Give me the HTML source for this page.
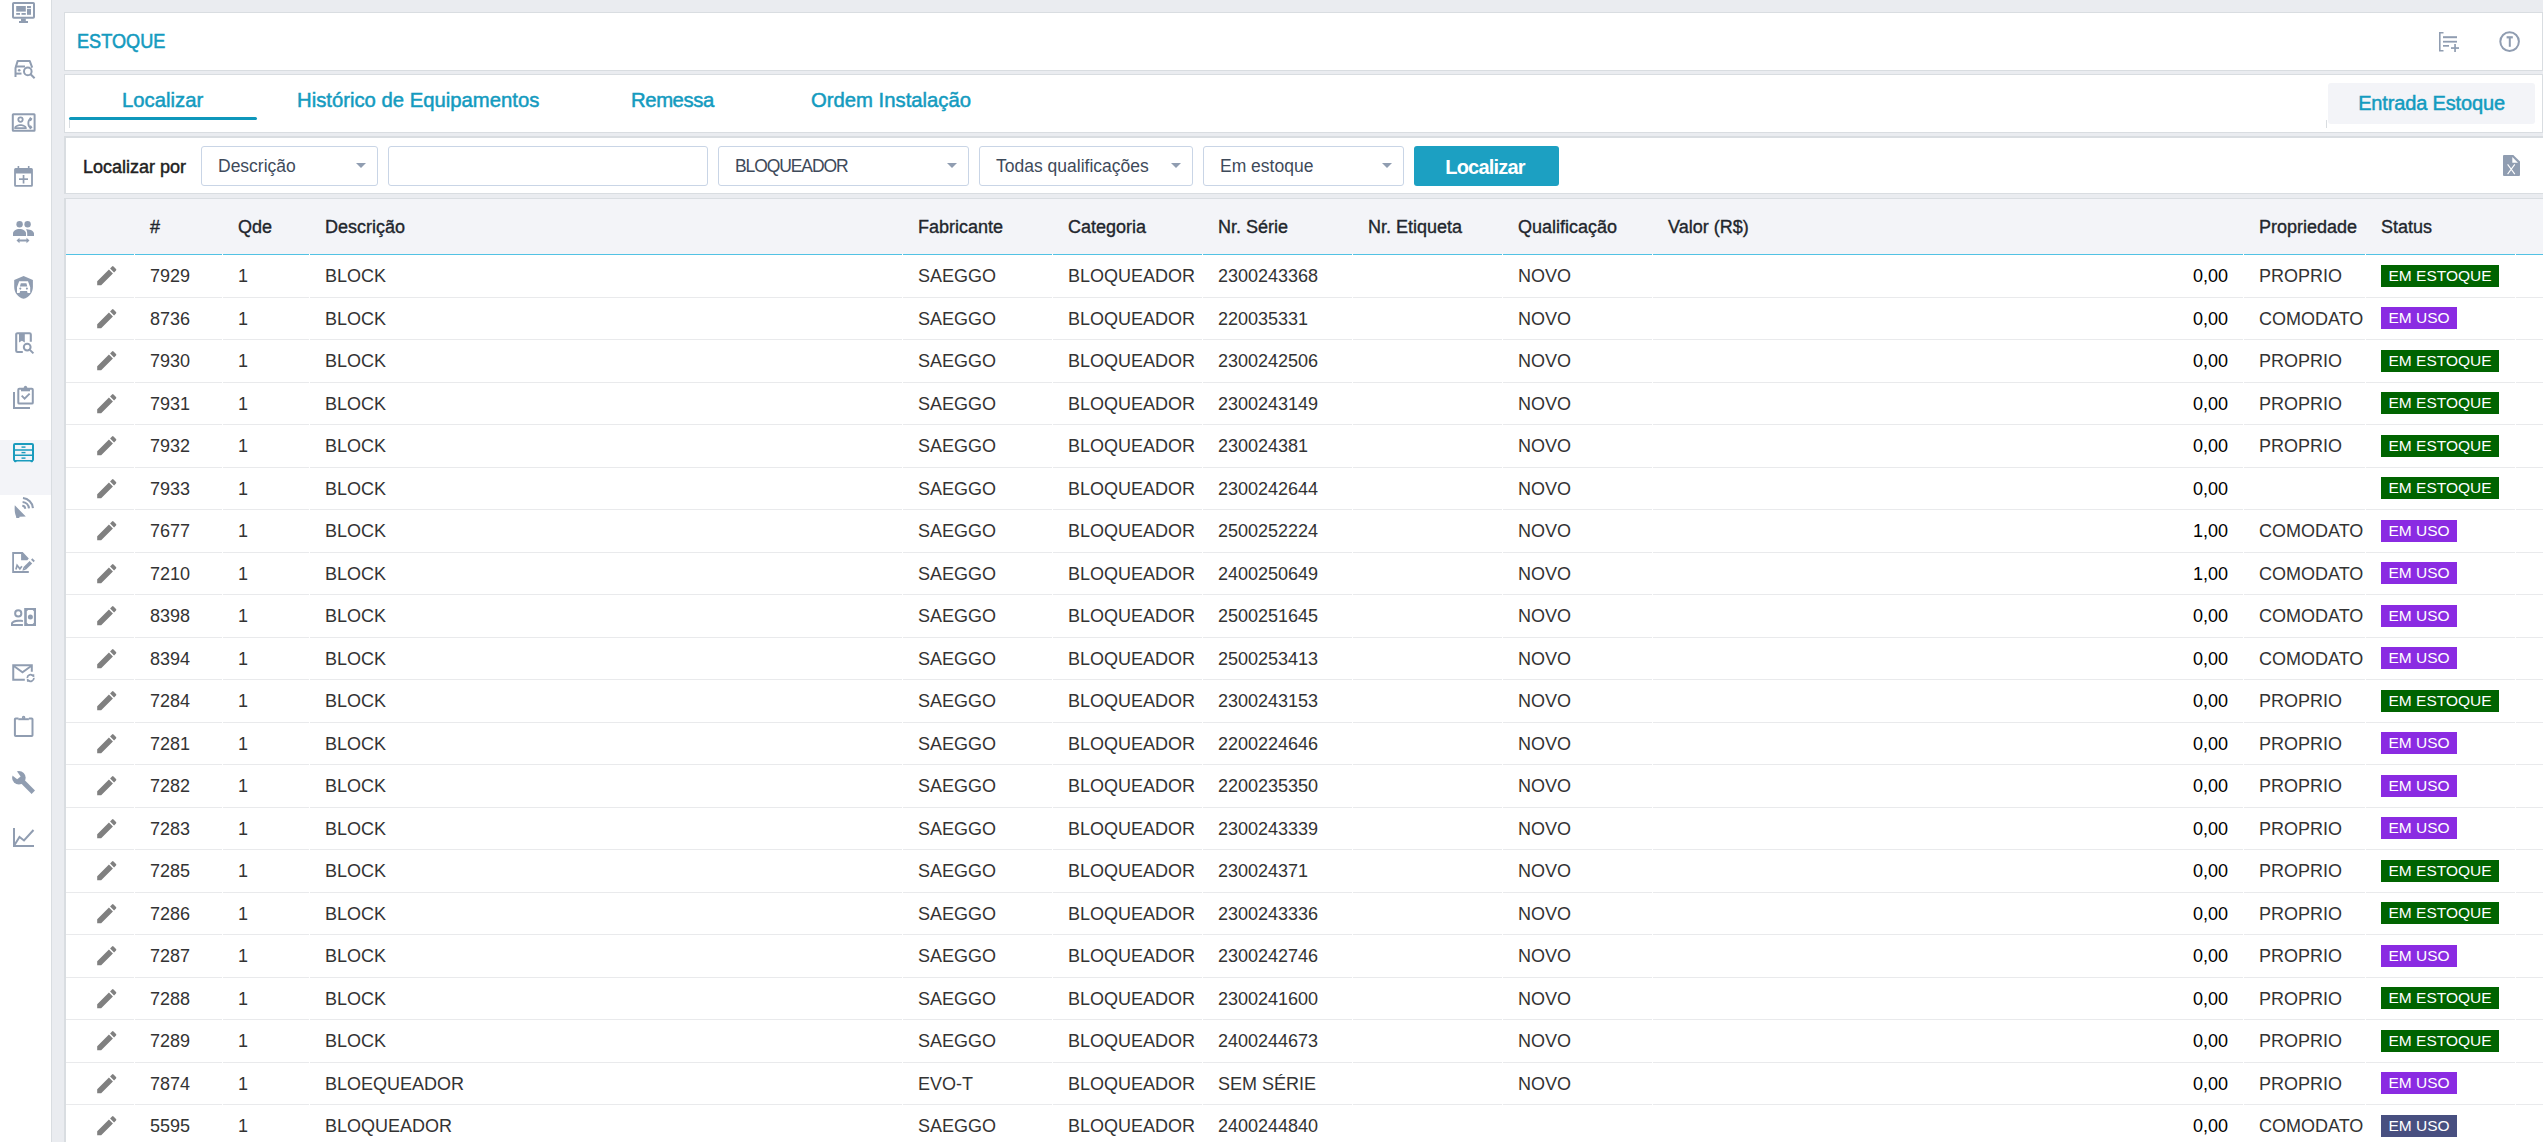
<!DOCTYPE html>
<html><head><meta charset="utf-8">
<style>
*{box-sizing:border-box;margin:0;padding:0}
html,body{width:2543px;height:1142px;overflow:hidden;background:#eaecf0;font-family:"Liberation Sans",sans-serif}
#side{position:absolute;left:0;top:0;width:52px;height:1142px;background:#fff;border-right:1px solid #d9dde1}
#side .it{position:absolute;left:0;width:51px;height:55px;display:flex;align-items:center;justify-content:center}
#side .it.act{background:#f3f4f8}
#side svg{fill:#909db1}
.card{position:absolute;left:64px;right:0;background:#fff;border:1px solid #d9dde1}
#c1{top:12px;height:59px}
#c2{top:74px;height:59px}
#c3{top:136px;height:58px;border-width:2px 0 1px 2px;right:0}
#tbl{position:absolute;left:64px;right:0;top:198px;bottom:0;background:#fff;border-top:1px solid #d9dde1;border-left:2px solid #d9dde1}
.title{position:absolute;left:12px;top:16.5px;font-size:19.5px;color:#149bbf;transform:scaleX(0.93);transform-origin:0 0;-webkit-text-stroke:0.55px #149bbf}
.tab{position:absolute;top:14px;font-size:20.3px;color:#149bbf;-webkit-text-stroke:0.5px #149bbf}
.tabline{position:absolute;left:4px;top:42px;width:188px;height:3px;background:#0e97bb;border-radius:2px}
.tabtick{position:absolute;left:4px;top:45px;width:1px;height:8px;background:#d9dde1}
#entrada{position:absolute;left:2263px;top:8px;width:207px;height:41px;background:#f3f4f8;border-radius:3px;font-size:20px;color:#149bbf;text-align:center;line-height:41px;-webkit-text-stroke:0.5px #149bbf;letter-spacing:-0.15px}
.lbl{position:absolute;left:17px;top:19px;font-size:18px;color:#222;-webkit-text-stroke:0.45px #222}
.sel{position:absolute;top:8px;height:40px;border:1px solid #c9d5e6;border-radius:3px;background:#fff;font-size:17.5px;color:#3e4a5a;padding-left:16px;line-height:38px}
.sel .ar{position:absolute;right:11px;top:16px;width:0;height:0;border-left:5.25px solid transparent;border-right:5.25px solid transparent;border-top:5.8px solid #909db1}
#btn{position:absolute;left:1348px;top:8px;width:145px;height:40px;background:#1ca0c2;border-radius:3px;color:#fff;font-size:20px;letter-spacing:-0.8px;text-align:center;line-height:42px;font-weight:bold;padding-right:3px}
.thead{position:absolute;left:0;right:0;top:0;height:56px;background:#f3f4f8;border-bottom:1px solid #52c2e4;display:flex}
.tr{display:flex;height:42.5px;border-bottom:1px solid #e9eaec;align-items:center}
.tbody{position:absolute;left:0;right:0;top:56px}
.c{flex:none;padding-left:16px;padding-top:2px;font-size:18px;color:#333;white-space:nowrap;overflow:hidden}
.thead .c{padding-top:0;color:#22262d;-webkit-text-stroke:0.35px #22262d;line-height:56px}
.c0{width:68px;padding-left:0}
.c1{width:88px}.c2{width:87px}.c3{width:593px}
.c4,.c5,.c6,.c7,.c8{width:150px}
.c9{width:591px;text-align:right;padding-left:0;padding-right:15px;color:#000}
.c10{width:122px}.c11{width:150px;padding-top:0}.c12{width:28px}
.pen{fill:#808080;margin-left:28px;margin-top:-2px;display:block}
.bd{display:inline-block;height:22px;line-height:22px;padding:0 7.5px;font-size:15.5px;color:#fff}
.be{background:#006400}.bu{background:#8a2be2}.bdk{background:#484f80}
</style></head><body>
<div id="side">
<svg width="51" height="1142" viewBox="0 0 51 1142" style="position:absolute;left:0;top:0">
<rect x="0" y="440" width="51" height="55" fill="#f3f4f8"/>
<g fill="#909db1" stroke="none">
 <path d="M13.8,2 h19.4 a1.8,1.8 0 0 1 1.8,1.8 v13.2 a1.8,1.8 0 0 1 -1.8,1.8 h-19.4 a1.8,1.8 0 0 1 -1.8,-1.8 v-13.2 a1.8,1.8 0 0 1 1.8,-1.8z M14,4 v12.8 h19 v-12.8z"/>
 <rect x="16.2" y="6" width="9.6" height="5.6"/>
 <rect x="16.2" y="13" width="3.8" height="1.8"/><rect x="21.5" y="13" width="4.3" height="1.8"/>
 <rect x="27" y="6" width="4" height="2.2"/><rect x="27" y="9" width="4" height="5.8"/>
 <rect x="21" y="18.5" width="4.8" height="3"/><rect x="19" y="21" width="9" height="2"/>
 <circle cx="19.2" cy="70.3" r="1.3"/>
 <path d="M13.3,113.3 h20.8 a1.5,1.5 0 0 1 1.5,1.5 v15.4 a1.5,1.5 0 0 1 -1.5,1.5 h-20.8 a1.5,1.5 0 0 1 -1.5,-1.5 v-15.4 a1.5,1.5 0 0 1 1.5,-1.5z M13.8,115.3 v14.4 h19.8 v-14.4z"/>
 <path d="M14.3,129 v-1.2 c0,-2.2 4,-3.6 6.2,-3.6 s6.2,1.4 6.2,3.6 v1.2z M16.3,127.3 h8.4 c-0.6,-0.7 -2.4,-1.3 -4.2,-1.3 s-3.6,0.6 -4.2,1.3z" fill-rule="evenodd"/>
 <path d="M30,117 l2.5,1.8 l-1.6,2.4 l-2.2,-1z M30,129.4 l2.5,-1.8 l-1.6,-2.4 l-2.2,1z"/>
 <path d="M15.6,168 h15.8 a1.5,1.5 0 0 1 1.5,1.5 v15.8 a1.5,1.5 0 0 1 -1.5,1.5 h-15.8 a1.5,1.5 0 0 1 -1.5,-1.5 v-15.8 a1.5,1.5 0 0 1 1.5,-1.5z M15.9,173.5 v11.5 h15.2 v-11.5z"/>
 <rect x="17.6" y="166" width="1.6" height="3"/><rect x="27.9" y="166" width="1.6" height="3"/>
 <rect x="19" y="178.3" width="9" height="1.7"/><rect x="22.7" y="175" width="1.7" height="8.5"/>
 <circle cx="19.6" cy="224.3" r="3.2"/><circle cx="27.6" cy="224.3" r="3.2"/>
 <path d="M13,236 v-2.5 c0,-2.6 3,-4.5 6.5,-4.5 s6.5,1.9 6.5,4.5 v2.5z"/>
 <path d="M27,229.3 c3.8,0.2 7,2 7,4.2 v2.5 h-6.8 v-2.5 c0,-1.6 -0.3,-3 -1.2,-4.2z"/>
 <path d="M16.5,240.5 l3,-2.8 v1.9 h7 v-1.9 l3,2.8 l-3,2.8 v-1.9 h-7 v1.9z"/>
 <path fill-rule="evenodd" d="M23.6,276 L14.2,280 v7 c0,5.8 4,10.6 9.4,11.8 c5.4,-1.2 9.3,-6 9.3,-11.8 v-7z M19.2,281.3 h8.8 l2.2,6 v5.7 h-2.6 l-0.6,-1.9 h-6.8 l-0.6,1.9 h-2.6 v-5.7z M20.8,283.2 l-0.9,3.4 h7.4 l-0.9,-3.4z M20.3,287.6 a1,1 0 1 0 0.01,0z M26.9,287.6 a1,1 0 1 0 0.01,0z"/>
 <path d="M19,334 h5.8 v8.5 l-2.9,-1.8 l-2.9,1.8z"/>
 <path fill-rule="evenodd" d="M19.2,387.8 h12.7 a1.9,1.9 0 0 1 1.9,1.9 v13 a1.9,1.9 0 0 1 -1.9,1.9 h-12.7 a1.9,1.9 0 0 1 -1.9,-1.9 v-13 a1.9,1.9 0 0 1 1.9,-1.9z M19.3,389.8 v12.8 h12.5 v-12.8z"/>
 <circle cx="25.5" cy="387.3" r="1.6"/><rect x="21" y="389" width="9" height="2.3"/>
 <path d="M21,396.3 l1.3,-1.3 l2.3,2.3 l4.4,-4.4 l1.3,1.3 l-5.7,5.7z"/>
 <path d="M13,392 h2 v15 h15 v1.9 h-17z"/>
 <path fill-rule="evenodd" d="M18.25,609.3 a4.1,4.1 0 1 1 0,8.2 a4.1,4.1 0 1 1 0,-8.2z M18.25,611.3 a2.1,2.1 0 1 0 0,4.2 a2.1,2.1 0 1 0 0,-4.2z"/>
 <path fill-rule="evenodd" d="M24.2,607.9 h11.8 v18.1 h-11.8z M26.8,611.2 l1.3,-1.2 h4.5 l1.3,1.2 v11.6 l-1.3,1.2 h-4.5 l-1.3,-1.2z"/>
 <circle cx="30.4" cy="617.1" r="2.5"/>
 <path fill-rule="evenodd" d="M11,626 v-2.2 c0,-2.5 3.5,-4 7.5,-4 c1.8,0 3.3,0.1 4.4,0.3 v2 c-1.1,-0.2 -2.6,-0.3 -4.4,-0.3 c-3.3,0 -5.5,1 -5.5,2 v0.2 h9.9 v2z"/>
 <circle cx="18.9" cy="777.8" r="6.8"/>
 <path d="M20.6,776.1 L35,790.5 L31.6,793.9 L17.2,779.5z"/>
 <path fill="#fff" d="M14.5,767.8 L20.6,776.5 L17.2,779.3 L9.5,773.2z"/>
</g>
<g fill="none" stroke="#909db1" stroke-width="2">
 <path d="M15.5,77 v-9 l2.1,-6.9 h12.2 l2.4,6.5" stroke-linejoin="round"/>
 <path d="M15.5,66.5 h9.5"/><path d="M15.5,73.6 h6"/>
 <circle cx="27.8" cy="71.4" r="3.8"/><path d="M30.6,74.2 l4,4"/>
 <path d="M31.2,118.3 c-2.1,1 -2.9,2.8 -2.9,4.9 s0.8,3.9 2.9,4.9" stroke-width="1.8"/>
 <circle cx="20.5" cy="119.6" r="2.2" stroke-width="1.8"/>
 <path d="M30.8,341.8 v-7.3 a1.3,1.3 0 0 0 -1.3,-1.3 h-12 a1.3,1.3 0 0 0 -1.3,1.3 v16.2 a1.3,1.3 0 0 0 1.3,1.3 h5.3" stroke-width="2.1"/>
 <circle cx="27.2" cy="347.1" r="3.4"/><path d="M29.9,349.9 l3.5,3.5"/>
 <path d="M22.28,505.81 A3.2,3.2 0 0 1 25.19,508.72" stroke-width="2.1"/>
 <path d="M22.61,502.03 A7,7 0 0 1 28.97,508.39" stroke-width="2.1"/>
 <path d="M22.96,498.04 A11,11 0 0 1 32.96,508.04" stroke-width="2.1"/>
 <path d="M15.9,569.5 L17.1,565.3 L19.9,568.8 L21.9,566.3" stroke-width="1.7" stroke-linejoin="miter"/>
 <path d="M24.6,568.6 L30.9,562.3" stroke-width="3.6"/>
 <path d="M32.3,560.9 L33.6,559.6" stroke-width="3.6"/>
 <path d="M24.8,679.8 H13.25 V665.2 H31.8 V671.7"/>
 <path d="M13.8,666 L22.5,672.3 L31.2,666"/>
 <path d="M27.3,678 A3.3,3.3 0 0 1 33.13,675.88 M33.9,678 A3.3,3.3 0 0 1 28.07,680.12" stroke-width="1.7"/>
 <path d="M18.5,718.5 h-2.8 a0.8,0.8 0 0 0 -0.8,0.8 v15.9 a0.8,0.8 0 0 0 0.8,0.8 h16 a0.8,0.8 0 0 0 0.8,-0.8 v-15.9 a0.8,0.8 0 0 0 -0.8,-0.8 h-2.8"/>
 <path d="M18.3,719.2 h10.6"/><circle cx="23.6" cy="717.6" r="1" stroke-width="1.5"/>
 <path d="M14,828 v18 h20" /><path d="M14.5,845 l5,-8 l4.5,3.5 l9.5,-10.5"/>
</g>
<path fill="#909db1" d="M14.8,505.3 L25.8,516.5 L19.6,516.8 L19.2,518 h-2.9 l-0.3,-1.8 c-1.2,-3 -1.6,-6.5 -1.2,-10.9z"/>
<path fill="#909db1" d="M12.2,552.1 h10.5 l6.1,6.5 l-1.5,1.6 h-6.2 v-6.3 h-7.1 v17 h14.8 v2 h-16.6z M23.33,567.33 L25.87,569.87 L22.4,570.8z"/>
<path fill="#909db1" d="M34.4,677.6 l-0.2,-3.6 l-3.3,1.5z M26.8,678.4 l0.2,3.6 l3.3,-1.5z"/>
<g fill="#1a9bbd">
 <path fill-rule="evenodd" d="M15,443 h17 a2,2 0 0 1 2,2 v14.5 a2,2 0 0 1 -2,2 h-17 a2,2 0 0 1 -2,-2 v-14.5 a2,2 0 0 1 2,-2z M15,445 v4.2 h17 v-4.2z M15,450.8 v3.7 h17 v-3.7z M15,456 v4 h17 v-4z"/>
 <rect x="21.5" y="446.4" width="4" height="1.4"/><rect x="21.5" y="451.9" width="4" height="1.4"/><rect x="21.5" y="457.4" width="4" height="1.4"/>
 <rect x="14" y="460" width="2.6" height="2.2" rx="1"/><rect x="30.4" y="460" width="2.6" height="2.2" rx="1"/>
</g>
</svg>

</div>
<div class="card" id="c1">
  <div class="title">ESTOQUE</div>
  <svg width="2543" height="60" style="position:absolute;left:-65px;top:-13px" fill="#909db1">
<path d="M2439,32 h4.5 v1.6 h-2.9 v16.3 h2.9 v1.6 h-4.5z"/>
<rect x="2443" y="36.2" width="14" height="2"/><rect x="2443" y="40.8" width="14" height="1.8"/><rect x="2443" y="45" width="6" height="1.7"/>
<rect x="2451" y="47.2" width="8" height="1.7"/><rect x="2454.2" y="44" width="1.7" height="8"/>
<circle cx="2509.6" cy="41.6" r="9.3" fill="none" stroke="#909db1" stroke-width="2"/>
<rect x="2506.6" y="36.2" width="6.2" height="2.2"/><rect x="2508.8" y="38" width="2" height="8.8"/>
</svg>
</div>
<div class="card" id="c2">
  <div class="tab" style="left:57px">Localizar</div>
  <div class="tab" style="left:232px">Histórico de Equipamentos</div>
  <div class="tab" style="left:566px;letter-spacing:-0.4px">Remessa</div>
  <div class="tab" style="left:746px">Ordem Instalação</div>
  <div class="tabline"></div><div class="tabtick"></div>
  <div style="position:absolute;left:2261px;top:45px;width:1px;height:8px;background:#d9dde1"></div><div id="entrada">Entrada Estoque</div>
</div>
<div class="card" id="c3">
  <div class="lbl">Localizar por</div>
  <div class="sel" style="left:135px;width:177px">Descrição<span class="ar"></span></div>
  <div class="sel" style="left:322px;width:320px"></div>
  <div class="sel" style="left:652px;width:251px"><span style="letter-spacing:-1.1px">BLOQUEADOR</span><span class="ar"></span></div>
  <div class="sel" style="left:913px;width:214px">Todas qualificações<span class="ar"></span></div>
  <div class="sel" style="left:1137px;width:201px">Em estoque<span class="ar"></span></div>
  <div id="btn">Localizar</div>
  <svg width="2543" height="200" style="position:absolute;left:-66px;top:-138px">
<path fill="#909db1" d="M2504,155 h9.3 l6.7,6.5 v13.5 a1,1 0 0 1 -1,1 h-15 a1,1 0 0 1 -1,-1 v-19 a1,1 0 0 1 1,-1z"/>
<path fill="#fff" d="M2512.3,157 v5.7 h5.7z"/>
<path stroke="#fff" stroke-width="1.1" d="M2507.6,164.3 l7.2,9.8 M2514.8,164.3 l-7.2,9.8"/>
</svg>
</div>
<div id="tbl">
  <div class="thead">
    <div class="c c0"></div><div class="c c1">#</div><div class="c c2">Qde</div><div class="c c3">Descrição</div>
    <div class="c c4">Fabricante</div><div class="c c5">Categoria</div><div class="c c6">Nr. Série</div><div class="c c7">Nr. Etiqueta</div>
    <div class="c c8">Qualificação</div><div class="c c9" style="text-align:left;padding-left:16px;color:#22262d">Valor (R$)</div><div class="c c10">Propriedade</div><div class="c c11">Status</div><div class="c c12"></div>
  </div>
  <div class="tbody">
<div class="tr"><div class="c c0"><svg class="pen" viewBox="0 0 24 24" width="25.5" height="25.5"><path d="M3 17.25V21h3.75L17.81 9.94l-3.75-3.75L3 17.25zM20.71 7.04a1 1 0 0 0 0-1.41l-2.34-2.34a1 1 0 0 0-1.41 0l-1.83 1.83 3.75 3.75 1.83-1.83z"/></svg></div><div class="c c1">7929</div><div class="c c2">1</div><div class="c c3">BLOCK</div><div class="c c4">SAEGGO</div><div class="c c5">BLOQUEADOR</div><div class="c c6">2300243368</div><div class="c c7"></div><div class="c c8">NOVO</div><div class="c c9">0,00</div><div class="c c10">PROPRIO</div><div class="c c11"><span class="bd be">EM ESTOQUE</span></div><div class="c c12"></div></div>
<div class="tr"><div class="c c0"><svg class="pen" viewBox="0 0 24 24" width="25.5" height="25.5"><path d="M3 17.25V21h3.75L17.81 9.94l-3.75-3.75L3 17.25zM20.71 7.04a1 1 0 0 0 0-1.41l-2.34-2.34a1 1 0 0 0-1.41 0l-1.83 1.83 3.75 3.75 1.83-1.83z"/></svg></div><div class="c c1">8736</div><div class="c c2">1</div><div class="c c3">BLOCK</div><div class="c c4">SAEGGO</div><div class="c c5">BLOQUEADOR</div><div class="c c6">220035331</div><div class="c c7"></div><div class="c c8">NOVO</div><div class="c c9">0,00</div><div class="c c10">COMODATO</div><div class="c c11"><span class="bd bu">EM USO</span></div><div class="c c12"></div></div>
<div class="tr"><div class="c c0"><svg class="pen" viewBox="0 0 24 24" width="25.5" height="25.5"><path d="M3 17.25V21h3.75L17.81 9.94l-3.75-3.75L3 17.25zM20.71 7.04a1 1 0 0 0 0-1.41l-2.34-2.34a1 1 0 0 0-1.41 0l-1.83 1.83 3.75 3.75 1.83-1.83z"/></svg></div><div class="c c1">7930</div><div class="c c2">1</div><div class="c c3">BLOCK</div><div class="c c4">SAEGGO</div><div class="c c5">BLOQUEADOR</div><div class="c c6">2300242506</div><div class="c c7"></div><div class="c c8">NOVO</div><div class="c c9">0,00</div><div class="c c10">PROPRIO</div><div class="c c11"><span class="bd be">EM ESTOQUE</span></div><div class="c c12"></div></div>
<div class="tr"><div class="c c0"><svg class="pen" viewBox="0 0 24 24" width="25.5" height="25.5"><path d="M3 17.25V21h3.75L17.81 9.94l-3.75-3.75L3 17.25zM20.71 7.04a1 1 0 0 0 0-1.41l-2.34-2.34a1 1 0 0 0-1.41 0l-1.83 1.83 3.75 3.75 1.83-1.83z"/></svg></div><div class="c c1">7931</div><div class="c c2">1</div><div class="c c3">BLOCK</div><div class="c c4">SAEGGO</div><div class="c c5">BLOQUEADOR</div><div class="c c6">2300243149</div><div class="c c7"></div><div class="c c8">NOVO</div><div class="c c9">0,00</div><div class="c c10">PROPRIO</div><div class="c c11"><span class="bd be">EM ESTOQUE</span></div><div class="c c12"></div></div>
<div class="tr"><div class="c c0"><svg class="pen" viewBox="0 0 24 24" width="25.5" height="25.5"><path d="M3 17.25V21h3.75L17.81 9.94l-3.75-3.75L3 17.25zM20.71 7.04a1 1 0 0 0 0-1.41l-2.34-2.34a1 1 0 0 0-1.41 0l-1.83 1.83 3.75 3.75 1.83-1.83z"/></svg></div><div class="c c1">7932</div><div class="c c2">1</div><div class="c c3">BLOCK</div><div class="c c4">SAEGGO</div><div class="c c5">BLOQUEADOR</div><div class="c c6">230024381</div><div class="c c7"></div><div class="c c8">NOVO</div><div class="c c9">0,00</div><div class="c c10">PROPRIO</div><div class="c c11"><span class="bd be">EM ESTOQUE</span></div><div class="c c12"></div></div>
<div class="tr"><div class="c c0"><svg class="pen" viewBox="0 0 24 24" width="25.5" height="25.5"><path d="M3 17.25V21h3.75L17.81 9.94l-3.75-3.75L3 17.25zM20.71 7.04a1 1 0 0 0 0-1.41l-2.34-2.34a1 1 0 0 0-1.41 0l-1.83 1.83 3.75 3.75 1.83-1.83z"/></svg></div><div class="c c1">7933</div><div class="c c2">1</div><div class="c c3">BLOCK</div><div class="c c4">SAEGGO</div><div class="c c5">BLOQUEADOR</div><div class="c c6">2300242644</div><div class="c c7"></div><div class="c c8">NOVO</div><div class="c c9">0,00</div><div class="c c10"></div><div class="c c11"><span class="bd be">EM ESTOQUE</span></div><div class="c c12"></div></div>
<div class="tr"><div class="c c0"><svg class="pen" viewBox="0 0 24 24" width="25.5" height="25.5"><path d="M3 17.25V21h3.75L17.81 9.94l-3.75-3.75L3 17.25zM20.71 7.04a1 1 0 0 0 0-1.41l-2.34-2.34a1 1 0 0 0-1.41 0l-1.83 1.83 3.75 3.75 1.83-1.83z"/></svg></div><div class="c c1">7677</div><div class="c c2">1</div><div class="c c3">BLOCK</div><div class="c c4">SAEGGO</div><div class="c c5">BLOQUEADOR</div><div class="c c6">2500252224</div><div class="c c7"></div><div class="c c8">NOVO</div><div class="c c9">1,00</div><div class="c c10">COMODATO</div><div class="c c11"><span class="bd bu">EM USO</span></div><div class="c c12"></div></div>
<div class="tr"><div class="c c0"><svg class="pen" viewBox="0 0 24 24" width="25.5" height="25.5"><path d="M3 17.25V21h3.75L17.81 9.94l-3.75-3.75L3 17.25zM20.71 7.04a1 1 0 0 0 0-1.41l-2.34-2.34a1 1 0 0 0-1.41 0l-1.83 1.83 3.75 3.75 1.83-1.83z"/></svg></div><div class="c c1">7210</div><div class="c c2">1</div><div class="c c3">BLOCK</div><div class="c c4">SAEGGO</div><div class="c c5">BLOQUEADOR</div><div class="c c6">2400250649</div><div class="c c7"></div><div class="c c8">NOVO</div><div class="c c9">1,00</div><div class="c c10">COMODATO</div><div class="c c11"><span class="bd bu">EM USO</span></div><div class="c c12"></div></div>
<div class="tr"><div class="c c0"><svg class="pen" viewBox="0 0 24 24" width="25.5" height="25.5"><path d="M3 17.25V21h3.75L17.81 9.94l-3.75-3.75L3 17.25zM20.71 7.04a1 1 0 0 0 0-1.41l-2.34-2.34a1 1 0 0 0-1.41 0l-1.83 1.83 3.75 3.75 1.83-1.83z"/></svg></div><div class="c c1">8398</div><div class="c c2">1</div><div class="c c3">BLOCK</div><div class="c c4">SAEGGO</div><div class="c c5">BLOQUEADOR</div><div class="c c6">2500251645</div><div class="c c7"></div><div class="c c8">NOVO</div><div class="c c9">0,00</div><div class="c c10">COMODATO</div><div class="c c11"><span class="bd bu">EM USO</span></div><div class="c c12"></div></div>
<div class="tr"><div class="c c0"><svg class="pen" viewBox="0 0 24 24" width="25.5" height="25.5"><path d="M3 17.25V21h3.75L17.81 9.94l-3.75-3.75L3 17.25zM20.71 7.04a1 1 0 0 0 0-1.41l-2.34-2.34a1 1 0 0 0-1.41 0l-1.83 1.83 3.75 3.75 1.83-1.83z"/></svg></div><div class="c c1">8394</div><div class="c c2">1</div><div class="c c3">BLOCK</div><div class="c c4">SAEGGO</div><div class="c c5">BLOQUEADOR</div><div class="c c6">2500253413</div><div class="c c7"></div><div class="c c8">NOVO</div><div class="c c9">0,00</div><div class="c c10">COMODATO</div><div class="c c11"><span class="bd bu">EM USO</span></div><div class="c c12"></div></div>
<div class="tr"><div class="c c0"><svg class="pen" viewBox="0 0 24 24" width="25.5" height="25.5"><path d="M3 17.25V21h3.75L17.81 9.94l-3.75-3.75L3 17.25zM20.71 7.04a1 1 0 0 0 0-1.41l-2.34-2.34a1 1 0 0 0-1.41 0l-1.83 1.83 3.75 3.75 1.83-1.83z"/></svg></div><div class="c c1">7284</div><div class="c c2">1</div><div class="c c3">BLOCK</div><div class="c c4">SAEGGO</div><div class="c c5">BLOQUEADOR</div><div class="c c6">2300243153</div><div class="c c7"></div><div class="c c8">NOVO</div><div class="c c9">0,00</div><div class="c c10">PROPRIO</div><div class="c c11"><span class="bd be">EM ESTOQUE</span></div><div class="c c12"></div></div>
<div class="tr"><div class="c c0"><svg class="pen" viewBox="0 0 24 24" width="25.5" height="25.5"><path d="M3 17.25V21h3.75L17.81 9.94l-3.75-3.75L3 17.25zM20.71 7.04a1 1 0 0 0 0-1.41l-2.34-2.34a1 1 0 0 0-1.41 0l-1.83 1.83 3.75 3.75 1.83-1.83z"/></svg></div><div class="c c1">7281</div><div class="c c2">1</div><div class="c c3">BLOCK</div><div class="c c4">SAEGGO</div><div class="c c5">BLOQUEADOR</div><div class="c c6">2200224646</div><div class="c c7"></div><div class="c c8">NOVO</div><div class="c c9">0,00</div><div class="c c10">PROPRIO</div><div class="c c11"><span class="bd bu">EM USO</span></div><div class="c c12"></div></div>
<div class="tr"><div class="c c0"><svg class="pen" viewBox="0 0 24 24" width="25.5" height="25.5"><path d="M3 17.25V21h3.75L17.81 9.94l-3.75-3.75L3 17.25zM20.71 7.04a1 1 0 0 0 0-1.41l-2.34-2.34a1 1 0 0 0-1.41 0l-1.83 1.83 3.75 3.75 1.83-1.83z"/></svg></div><div class="c c1">7282</div><div class="c c2">1</div><div class="c c3">BLOCK</div><div class="c c4">SAEGGO</div><div class="c c5">BLOQUEADOR</div><div class="c c6">2200235350</div><div class="c c7"></div><div class="c c8">NOVO</div><div class="c c9">0,00</div><div class="c c10">PROPRIO</div><div class="c c11"><span class="bd bu">EM USO</span></div><div class="c c12"></div></div>
<div class="tr"><div class="c c0"><svg class="pen" viewBox="0 0 24 24" width="25.5" height="25.5"><path d="M3 17.25V21h3.75L17.81 9.94l-3.75-3.75L3 17.25zM20.71 7.04a1 1 0 0 0 0-1.41l-2.34-2.34a1 1 0 0 0-1.41 0l-1.83 1.83 3.75 3.75 1.83-1.83z"/></svg></div><div class="c c1">7283</div><div class="c c2">1</div><div class="c c3">BLOCK</div><div class="c c4">SAEGGO</div><div class="c c5">BLOQUEADOR</div><div class="c c6">2300243339</div><div class="c c7"></div><div class="c c8">NOVO</div><div class="c c9">0,00</div><div class="c c10">PROPRIO</div><div class="c c11"><span class="bd bu">EM USO</span></div><div class="c c12"></div></div>
<div class="tr"><div class="c c0"><svg class="pen" viewBox="0 0 24 24" width="25.5" height="25.5"><path d="M3 17.25V21h3.75L17.81 9.94l-3.75-3.75L3 17.25zM20.71 7.04a1 1 0 0 0 0-1.41l-2.34-2.34a1 1 0 0 0-1.41 0l-1.83 1.83 3.75 3.75 1.83-1.83z"/></svg></div><div class="c c1">7285</div><div class="c c2">1</div><div class="c c3">BLOCK</div><div class="c c4">SAEGGO</div><div class="c c5">BLOQUEADOR</div><div class="c c6">230024371</div><div class="c c7"></div><div class="c c8">NOVO</div><div class="c c9">0,00</div><div class="c c10">PROPRIO</div><div class="c c11"><span class="bd be">EM ESTOQUE</span></div><div class="c c12"></div></div>
<div class="tr"><div class="c c0"><svg class="pen" viewBox="0 0 24 24" width="25.5" height="25.5"><path d="M3 17.25V21h3.75L17.81 9.94l-3.75-3.75L3 17.25zM20.71 7.04a1 1 0 0 0 0-1.41l-2.34-2.34a1 1 0 0 0-1.41 0l-1.83 1.83 3.75 3.75 1.83-1.83z"/></svg></div><div class="c c1">7286</div><div class="c c2">1</div><div class="c c3">BLOCK</div><div class="c c4">SAEGGO</div><div class="c c5">BLOQUEADOR</div><div class="c c6">2300243336</div><div class="c c7"></div><div class="c c8">NOVO</div><div class="c c9">0,00</div><div class="c c10">PROPRIO</div><div class="c c11"><span class="bd be">EM ESTOQUE</span></div><div class="c c12"></div></div>
<div class="tr"><div class="c c0"><svg class="pen" viewBox="0 0 24 24" width="25.5" height="25.5"><path d="M3 17.25V21h3.75L17.81 9.94l-3.75-3.75L3 17.25zM20.71 7.04a1 1 0 0 0 0-1.41l-2.34-2.34a1 1 0 0 0-1.41 0l-1.83 1.83 3.75 3.75 1.83-1.83z"/></svg></div><div class="c c1">7287</div><div class="c c2">1</div><div class="c c3">BLOCK</div><div class="c c4">SAEGGO</div><div class="c c5">BLOQUEADOR</div><div class="c c6">2300242746</div><div class="c c7"></div><div class="c c8">NOVO</div><div class="c c9">0,00</div><div class="c c10">PROPRIO</div><div class="c c11"><span class="bd bu">EM USO</span></div><div class="c c12"></div></div>
<div class="tr"><div class="c c0"><svg class="pen" viewBox="0 0 24 24" width="25.5" height="25.5"><path d="M3 17.25V21h3.75L17.81 9.94l-3.75-3.75L3 17.25zM20.71 7.04a1 1 0 0 0 0-1.41l-2.34-2.34a1 1 0 0 0-1.41 0l-1.83 1.83 3.75 3.75 1.83-1.83z"/></svg></div><div class="c c1">7288</div><div class="c c2">1</div><div class="c c3">BLOCK</div><div class="c c4">SAEGGO</div><div class="c c5">BLOQUEADOR</div><div class="c c6">2300241600</div><div class="c c7"></div><div class="c c8">NOVO</div><div class="c c9">0,00</div><div class="c c10">PROPRIO</div><div class="c c11"><span class="bd be">EM ESTOQUE</span></div><div class="c c12"></div></div>
<div class="tr"><div class="c c0"><svg class="pen" viewBox="0 0 24 24" width="25.5" height="25.5"><path d="M3 17.25V21h3.75L17.81 9.94l-3.75-3.75L3 17.25zM20.71 7.04a1 1 0 0 0 0-1.41l-2.34-2.34a1 1 0 0 0-1.41 0l-1.83 1.83 3.75 3.75 1.83-1.83z"/></svg></div><div class="c c1">7289</div><div class="c c2">1</div><div class="c c3">BLOCK</div><div class="c c4">SAEGGO</div><div class="c c5">BLOQUEADOR</div><div class="c c6">2400244673</div><div class="c c7"></div><div class="c c8">NOVO</div><div class="c c9">0,00</div><div class="c c10">PROPRIO</div><div class="c c11"><span class="bd be">EM ESTOQUE</span></div><div class="c c12"></div></div>
<div class="tr"><div class="c c0"><svg class="pen" viewBox="0 0 24 24" width="25.5" height="25.5"><path d="M3 17.25V21h3.75L17.81 9.94l-3.75-3.75L3 17.25zM20.71 7.04a1 1 0 0 0 0-1.41l-2.34-2.34a1 1 0 0 0-1.41 0l-1.83 1.83 3.75 3.75 1.83-1.83z"/></svg></div><div class="c c1">7874</div><div class="c c2">1</div><div class="c c3">BLOEQUEADOR</div><div class="c c4">EVO-T</div><div class="c c5">BLOQUEADOR</div><div class="c c6">SEM SÉRIE</div><div class="c c7"></div><div class="c c8">NOVO</div><div class="c c9">0,00</div><div class="c c10">PROPRIO</div><div class="c c11"><span class="bd bu">EM USO</span></div><div class="c c12"></div></div>
<div class="tr"><div class="c c0"><svg class="pen" viewBox="0 0 24 24" width="25.5" height="25.5"><path d="M3 17.25V21h3.75L17.81 9.94l-3.75-3.75L3 17.25zM20.71 7.04a1 1 0 0 0 0-1.41l-2.34-2.34a1 1 0 0 0-1.41 0l-1.83 1.83 3.75 3.75 1.83-1.83z"/></svg></div><div class="c c1">5595</div><div class="c c2">1</div><div class="c c3">BLOQUEADOR</div><div class="c c4">SAEGGO</div><div class="c c5">BLOQUEADOR</div><div class="c c6">2400244840</div><div class="c c7"></div><div class="c c8"></div><div class="c c9">0,00</div><div class="c c10">COMODATO</div><div class="c c11"><span class="bd bdk">EM USO</span></div><div class="c c12"></div></div>
  </div>
  <svg width="2477" height="900" style="position:absolute;left:0;top:55px" fill="#fff"><rect x="68" y="0" width="1" height="900"/><rect x="156" y="0" width="1" height="900"/><rect x="243" y="0" width="1" height="900"/><rect x="836" y="0" width="1" height="900"/><rect x="986" y="0" width="1" height="900"/><rect x="1136" y="0" width="1" height="900"/><rect x="1286" y="0" width="1" height="900"/><rect x="1436" y="0" width="1" height="900"/><rect x="1586" y="0" width="1" height="900"/><rect x="2177" y="0" width="1" height="900"/><rect x="2299" y="0" width="1" height="900"/><rect x="2449" y="0" width="1" height="900"/></svg>
</div>
</body></html>
